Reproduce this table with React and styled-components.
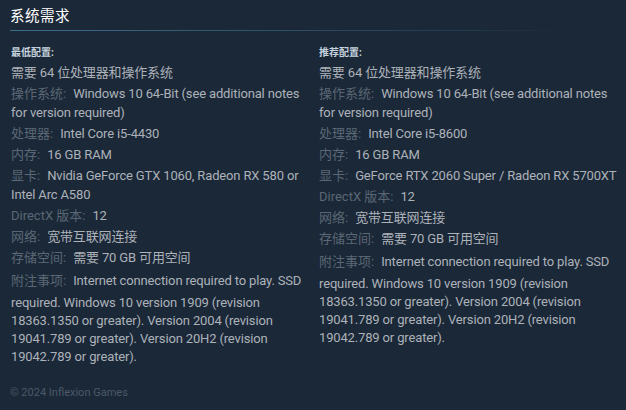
import React from 'react';
import styled, { createGlobalStyle } from 'styled-components';

const GlobalStyle = createGlobalStyle`
   html, body {
      margin: 0;
      padding: 0;
      background: #1b2838;
   }
   body {
      font-family: Roboto, Arial, "Noto Sans CJK SC", sans-serif;
   }
`;

//Data
const minimum = [
   { value: '需要 64 位处理器和操作系统' },
   { label: '操作系统:', value: 'Windows 10 64-Bit (see additional notes for version required)' },
   { label: '处理器:', value: 'Intel Core i5-4430' },
   { label: '内存:', value: '16 GB RAM' },
   { label: '显卡:', value: 'Nvidia GeForce GTX 1060, Radeon RX 580 or Intel Arc A580' },
   { label: 'DirectX 版本:', value: '12' },
   { label: '网络:', value: '宽带互联网连接' },
   { label: '存储空间:', value: '需要 70 GB 可用空间' },
   {
      label: '附注事项:',
      value:
         'Internet connection required to play. SSD required. Windows 10 version 1909 (revision 18363.1350 or greater). Version 2004 (revision 19041.789 or greater). Version 20H2 (revision 19042.789 or greater).',
   },
];

const recommended = [
   { value: '需要 64 位处理器和操作系统' },
   { label: '操作系统:', value: 'Windows 10 64-Bit (see additional notes for version required)' },
   { label: '处理器:', value: 'Intel Core i5-8600' },
   { label: '内存:', value: '16 GB RAM' },
   { label: '显卡:', value: 'GeForce RTX 2060 Super / Radeon RX 5700XT' },
   { label: 'DirectX 版本:', value: '12' },
   { label: '网络:', value: '宽带互联网连接' },
   { label: '存储空间:', value: '需要 70 GB 可用空间' },
   {
      label: '附注事项:',
      value:
         'Internet connection required to play. SSD required. Windows 10 version 1909 (revision 18363.1350 or greater). Version 2004 (revision 19041.789 or greater). Version 20H2 (revision 19042.789 or greater).',
   },
];

const ReqColumn = ({ title, items }) => (
   <Column>
      <ColTitle>{title}</ColTitle>
      <List>
         {items.map((item, i) => (
            <Item key={i}>
               {item.label && <Label>{item.label}</Label>}
               {item.value}
            </Item>
         ))}
      </List>
   </Column>
);

const App = () => {
   return (
      <>
         <GlobalStyle />
         <Section>
            <Heading>系统需求</Heading>
            <Columns>
               <ReqColumn title='最低配置:' items={minimum} />
               <ReqColumn title='推荐配置:' items={recommended} />
            </Columns>
            <Footer>© 2024 Inflexion Games</Footer>
         </Section>
      </>
   );
};

const Section = styled.div`
   width: 626px;
   height: 410px;
   box-sizing: border-box;
   padding: 8px 4px 0 10px;
   background: #1b2838;
`;

const Heading = styled.h2`
   margin: 0;
   padding-bottom: 5px;
   font-size: 14.5px;
   font-weight: normal;
   line-height: 18px;
   color: #ffffff;
   letter-spacing: 0.5px;
   &::after {
      content: '';
      display: block;
      height: 1px;
      margin-top: 4px;
      width: 560px;
      background: linear-gradient(
         to right,
         #3b6e8c 0%,
         #2f5670 40%,
         rgba(47, 86, 112, 0.4) 80%,
         rgba(47, 86, 112, 0) 100%
      );
   }
`;

const Columns = styled.div`
   display: grid;
   grid-template-columns: 298px 1fr;
   column-gap: 10px;
   padding-left: 1px;
   margin-top: 10px;
`;

const Column = styled.div`
   display: flex;
   flex-direction: column;
`;

const ColTitle = styled.strong`
   font-size: 10px;
   line-height: 14px;
   color: #c6d4df;
   font-weight: bold;
   margin-bottom: 3px;
`;

const List = styled.ul`
   list-style: none;
   margin: 0;
   padding: 0;
`;

const Item = styled.li`
   font-size: 13px;
   line-height: 19px;
   letter-spacing: -0.15px;
   color: #acb2b8;
   margin-bottom: 2px;
   &:last-child {
      line-height: 18px;
      margin-top: -1px;
   }
   &:last-child > span {
      line-height: 26px;
   }
`;

const Label = styled.span`
   color: #5a6774;
   margin-right: 7px;
   letter-spacing: 0;
`;

const Footer = styled.div`
   margin-top: 18px;
   font-size: 11px;
   color: #4b5968;
`;

export default App;
